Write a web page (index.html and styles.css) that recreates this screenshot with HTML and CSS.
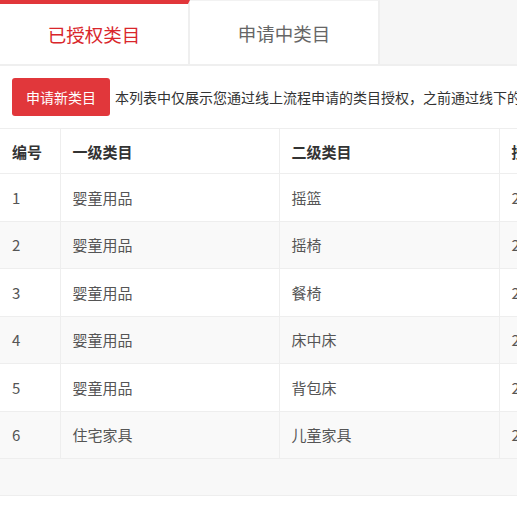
FILE: index.html
```html
<!DOCTYPE html>
<html lang="zh-CN">
<head>
<meta charset="utf-8">
<title>类目授权</title>
<link rel="stylesheet" href="styles.css">
</head>
<body>
<div class="page">
  <div class="tabs">
    <div class="tab active">已授权类目</div>
    <div class="tab">申请中类目</div>
  </div>
  <div class="toolbar">
    <button class="btn">申请新类目</button>
    <span class="desc">本列表中仅展示您通过线上流程申请的类目授权，之前通过线下的类目授权请联系对接人员查询</span>
  </div>
  <div class="table-wrap">
    <table class="grid">
      <colgroup>
        <col class="c-no"><col class="c-l1"><col class="c-l2"><col class="c-time">
      </colgroup>
      <thead>
        <tr><th>编号</th><th>一级类目</th><th>二级类目</th><th>授权时间</th></tr>
      </thead>
      <tbody>
        <tr><td>1</td><td>婴童用品</td><td>摇篮</td><td>2017-03-12 10:21:36</td></tr>
        <tr><td>2</td><td>婴童用品</td><td>摇椅</td><td>2017-03-12 10:21:36</td></tr>
        <tr><td>3</td><td>婴童用品</td><td>餐椅</td><td>2017-03-12 10:21:36</td></tr>
        <tr><td>4</td><td>婴童用品</td><td>床中床</td><td>2017-03-12 10:21:36</td></tr>
        <tr><td>5</td><td>婴童用品</td><td>背包床</td><td>2017-03-12 10:21:36</td></tr>
        <tr><td>6</td><td>住宅家具</td><td>儿童家具</td><td>2017-03-12 10:21:36</td></tr>
      </tbody>
    </table>
    <div class="table-foot"></div>
  </div>
</div>
</body>
</html>
```
FILE: styles.css
```css
html, body {
  margin: 0;
  padding: 0;
  background: #fff;
  overflow: hidden;
}
body {
  font-family: "Noto Sans CJK SC", "Open Sans", sans-serif;
  color: #333;
}
.page {
  width: 517px;
  overflow: hidden;
}
.tabs {
  display: flex;
  background: #f6f6f6;
  border-bottom: 2px solid #efefef;
  height: 64px;
}
.tab {
  box-sizing: border-box;
  width: 190px;
  height: 64px;
  background: #fff;
  border-right: 2px solid #efefef;
  border-top: 1px solid #f2f2f2;
  font-size: 18.5px;
  color: #666;
  display: flex;
  align-items: center;
  justify-content: center;
}
.tab.active {
  border-top: 4px solid #e1363a;
  color: #d9262b;
}
.toolbar {
  display: flex;
  align-items: center;
  height: 62px;
  padding: 0 12px;
  white-space: nowrap;
  overflow: hidden;
}
.btn {
  flex: none;
  width: 98px;
  height: 38px;
  border: none;
  border-radius: 3px;
  background: #e1373b;
  color: #fff;
  font-family: inherit;
  font-size: 14px;
  padding: 0;
}
.desc {
  margin-left: 5px;
  font-size: 14px;
  color: #333;
}
.table-wrap {
  width: 517px;
  overflow: hidden;
}
.grid {
  border-collapse: collapse;
  table-layout: fixed;
  width: 720px;
  border-top: 1px solid #eee;
}
.c-no { width: 60px; }
.c-l1 { width: 219px; }
.c-l2 { width: 220px; }
.c-time { width: 221px; }
.grid th, .grid td {
  border: 1px solid #eee;
  text-align: left;
  padding: 0 12px;
  font-size: 15px;
  white-space: nowrap;
  overflow: hidden;
}
.grid th:first-child, .grid td:first-child {
  border-left: none;
}
.grid th {
  height: 44px;
  font-weight: bold;
  color: #333;
  background: #fff;
}
.grid td {
  height: 46.5px;
  color: #555;
}
.grid tbody tr:nth-child(even) td {
  background: #f9f9f9;
}
.table-foot {
  height: 36px;
  background: #f8f8f8;
  border-bottom: 1px solid #eee;
}
```
